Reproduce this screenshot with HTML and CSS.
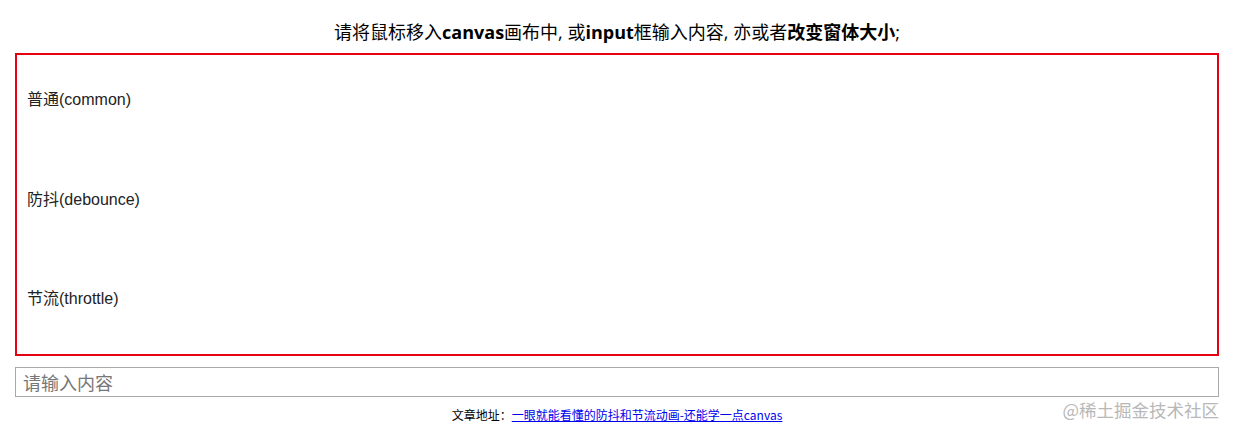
FILE: index.html
```html
<!DOCTYPE html>
<html lang="zh-CN">
<head>
<meta charset="utf-8">
<title>防抖节流</title>
<link rel="stylesheet" href="styles.css">
</head>
<body>
<div class="page">
  <p class="tip">请将鼠标移入<b>canvas</b>画布中, 或<b>input</b>框输入内容, 亦或者<b>改变窗体大小</b>;</p>
  <div class="board">
    <div class="row"><span class="label">普通(common)</span></div>
    <div class="row"><span class="label">防抖(debounce)</span></div>
    <div class="row"><span class="label">节流(throttle)</span></div>
  </div>
  <input class="field" type="text" placeholder="请输入内容">
  <p class="footer">文章地址：<a href="#" class="link">一眼就能看懂的防抖和节流动画-还能学一点canvas</a></p>
  <div class="watermark">@稀土掘金技术社区</div>
</div>
</body>
</html>
```
FILE: styles.css
```css
html, body {
  margin: 0;
  padding: 0;
  background: #fff;
}
body {
  font-family: "Open Sans", "Noto Sans CJK SC", sans-serif;
  color: #000;
}
.page {
  position: relative;
  padding: 20px 16px 0 15px;
  height: 435px;
  box-sizing: border-box;
}
.tip {
  margin: 0 0 9px;
  font-size: 18px;
  line-height: 24px;
  text-align: center;
}
.tip b {
  font-weight: 700;
}
.board {
  border: 2px solid #e60012;
  height: 299px;
  display: flex;
  flex-direction: column;
}
.row {
  height: 100px;
  display: flex;
  align-items: flex-start;
  padding: 36px 0 0 10px;
  box-sizing: border-box;
}
.label {
  font-family: "Liberation Sans", "Noto Sans CJK SC", sans-serif;
  font-size: 16px;
  line-height: 18px;
  color: #222;
}
.field {
  display: block;
  width: 100%;
  box-sizing: border-box;
  margin: 11px 0 0;
  height: 30px;
  border: 1px solid #a9a9a9;
  padding: 0 7px;
  font-family: "Noto Sans CJK SC", sans-serif;
  font-size: 18px;
  outline: none;
}
.field::placeholder {
  color: #777;
}
.footer {
  margin: 10px 0 0;
  font-size: 12px;
  line-height: 16px;
  text-align: center;
  font-family: "Noto Sans CJK SC", sans-serif;
}
.link {
  color: #0000ee;
  text-decoration: underline;
}
.watermark {
  position: absolute;
  right: 16px;
  top: 399px;
  font-family: "Noto Sans CJK SC", sans-serif;
  font-size: 17.5px;
  line-height: 22px;
  color: #b8b8b8;
}
```
